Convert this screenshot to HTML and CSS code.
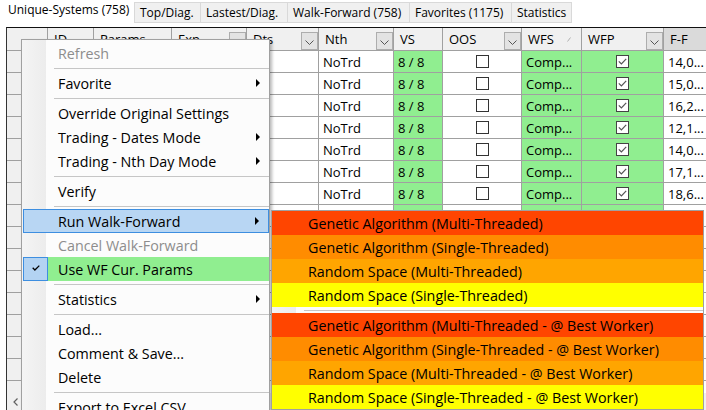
FILE: index.html
```html
<!DOCTYPE html>
<html>
<head>
<meta charset="utf-8">
<title>Unique-Systems</title>
<link rel="stylesheet" href="styles.css">
</head>
<body>
<div class="tabs">
  <div class="tab active">Unique-Systems (758)</div>
  <div class="tab first w1">Top/Diag.</div>
  <div class="tab w2">Lastest/Diag.</div>
  <div class="tab w3">Walk-Forward (758)</div>
  <div class="tab w4">Favorites (1175)</div>
  <div class="tab w5">Statistics</div>
</div>

<div class="grid">
  <div class="row hrow">
    <div class="c h"></div>
    <div class="c h">ID</div>
    <div class="c h">Params</div>
    <div class="c h">Exp<span class="dd"><svg width="9" height="5" viewBox="0 0 9 5"><path d="M0.5 0.5l4 4 4-4" fill="none" stroke="#555"/></svg></span></div>
    <div class="c h">Dts<span class="dd"><svg width="9" height="5" viewBox="0 0 9 5"><path d="M0.5 0.5l4 4 4-4" fill="none" stroke="#555"/></svg></span></div>
    <div class="c h">Nth<span class="dd"><svg width="9" height="5" viewBox="0 0 9 5"><path d="M0.5 0.5l4 4 4-4" fill="none" stroke="#555"/></svg></span></div>
    <div class="c h">VS</div>
    <div class="c h">OOS<span class="dd"><svg width="9" height="5" viewBox="0 0 9 5"><path d="M0.5 0.5l4 4 4-4" fill="none" stroke="#555"/></svg></span></div>
    <div class="c h">WFS<svg class="sort" width="4" height="5" viewBox="0 0 4 5"><path d="M0.5 4.5L3.5 0.5" stroke="#b0b0b0"/></svg></div>
    <div class="c h">WFP<span class="dd"><svg width="9" height="5" viewBox="0 0 9 5"><path d="M0.5 0.5l4 4 4-4" fill="none" stroke="#555"/></svg></span></div>
    <div class="c h sel">F-F</div>
  </div>
  <div class="rows">
    <div class="row"><div class="c rh"></div><div class="c"></div><div class="c"></div><div class="c"></div><div class="c"></div><div class="c">NoTrd</div><div class="c g">8 / 8</div><div class="c cb"><span class="box"></span></div><div class="c g">Comp...</div><div class="c g cb"><svg width="13" height="13" viewBox="0 0 13 13"><rect x="0.5" y="0.5" width="12" height="12" fill="#fff" stroke="#444"/><path d="M2.8 6.4l2.6 2.6 4.8-5.2" fill="none" stroke="#555" stroke-width="1.2"/></svg></div><div class="c">14,0...</div></div>
    <div class="row"><div class="c rh"></div><div class="c"></div><div class="c"></div><div class="c"></div><div class="c"></div><div class="c">NoTrd</div><div class="c g">8 / 8</div><div class="c cb"><span class="box"></span></div><div class="c g">Comp...</div><div class="c g cb"><svg width="13" height="13" viewBox="0 0 13 13"><rect x="0.5" y="0.5" width="12" height="12" fill="#fff" stroke="#444"/><path d="M2.8 6.4l2.6 2.6 4.8-5.2" fill="none" stroke="#555" stroke-width="1.2"/></svg></div><div class="c">15,0...</div></div>
    <div class="row"><div class="c rh"></div><div class="c"></div><div class="c"></div><div class="c"></div><div class="c"></div><div class="c">NoTrd</div><div class="c g">8 / 8</div><div class="c cb"><span class="box"></span></div><div class="c g">Comp...</div><div class="c g cb"><svg width="13" height="13" viewBox="0 0 13 13"><rect x="0.5" y="0.5" width="12" height="12" fill="#fff" stroke="#444"/><path d="M2.8 6.4l2.6 2.6 4.8-5.2" fill="none" stroke="#555" stroke-width="1.2"/></svg></div><div class="c">16,2...</div></div>
    <div class="row"><div class="c rh"></div><div class="c"></div><div class="c"></div><div class="c"></div><div class="c"></div><div class="c">NoTrd</div><div class="c g">8 / 8</div><div class="c cb"><span class="box"></span></div><div class="c g">Comp...</div><div class="c g cb"><svg width="13" height="13" viewBox="0 0 13 13"><rect x="0.5" y="0.5" width="12" height="12" fill="#fff" stroke="#444"/><path d="M2.8 6.4l2.6 2.6 4.8-5.2" fill="none" stroke="#555" stroke-width="1.2"/></svg></div><div class="c">12,1...</div></div>
    <div class="row"><div class="c rh"></div><div class="c"></div><div class="c"></div><div class="c"></div><div class="c"></div><div class="c">NoTrd</div><div class="c g">8 / 8</div><div class="c cb"><span class="box"></span></div><div class="c g">Comp...</div><div class="c g cb"><svg width="13" height="13" viewBox="0 0 13 13"><rect x="0.5" y="0.5" width="12" height="12" fill="#fff" stroke="#444"/><path d="M2.8 6.4l2.6 2.6 4.8-5.2" fill="none" stroke="#555" stroke-width="1.2"/></svg></div><div class="c">14,0...</div></div>
    <div class="row"><div class="c rh"></div><div class="c"></div><div class="c"></div><div class="c"></div><div class="c"></div><div class="c">NoTrd</div><div class="c g">8 / 8</div><div class="c cb"><span class="box"></span></div><div class="c g">Comp...</div><div class="c g cb"><svg width="13" height="13" viewBox="0 0 13 13"><rect x="0.5" y="0.5" width="12" height="12" fill="#fff" stroke="#444"/><path d="M2.8 6.4l2.6 2.6 4.8-5.2" fill="none" stroke="#555" stroke-width="1.2"/></svg></div><div class="c">17,1...</div></div>
    <div class="row"><div class="c rh"></div><div class="c"></div><div class="c"></div><div class="c"></div><div class="c"></div><div class="c">NoTrd</div><div class="c g">8 / 8</div><div class="c cb"><span class="box"></span></div><div class="c g">Comp...</div><div class="c g cb"><svg width="13" height="13" viewBox="0 0 13 13"><rect x="0.5" y="0.5" width="12" height="12" fill="#fff" stroke="#444"/><path d="M2.8 6.4l2.6 2.6 4.8-5.2" fill="none" stroke="#555" stroke-width="1.2"/></svg></div><div class="c">18,6...</div></div>
    <div class="row"><div class="c rh"></div><div class="c"></div><div class="c"></div><div class="c"></div><div class="c"></div><div class="c"></div><div class="c g"></div><div class="c"></div><div class="c g"></div><div class="c g"></div><div class="c"></div></div>
    <div class="row"><div class="c rh"></div><div class="c"></div><div class="c"></div><div class="c"></div><div class="c"></div><div class="c"></div><div class="c g"></div><div class="c"></div><div class="c g"></div><div class="c g"></div><div class="c"></div></div>
    <div class="row"><div class="c rh"></div><div class="c"></div><div class="c"></div><div class="c"></div><div class="c"></div><div class="c"></div><div class="c g"></div><div class="c"></div><div class="c g"></div><div class="c g"></div><div class="c"></div></div>
    <div class="row"><div class="c rh"></div><div class="c"></div><div class="c"></div><div class="c"></div><div class="c"></div><div class="c"></div><div class="c g"></div><div class="c"></div><div class="c g"></div><div class="c g"></div><div class="c"></div></div>
    <div class="row"><div class="c rh"></div><div class="c"></div><div class="c"></div><div class="c"></div><div class="c"></div><div class="c"></div><div class="c g"></div><div class="c"></div><div class="c g"></div><div class="c g"></div><div class="c"></div></div>
    <div class="row"><div class="c rh"></div><div class="c"></div><div class="c"></div><div class="c"></div><div class="c"></div><div class="c"></div><div class="c g"></div><div class="c"></div><div class="c g"></div><div class="c g"></div><div class="c"></div></div>
    <div class="row"><div class="c rh"></div><div class="c"></div><div class="c"></div><div class="c"></div><div class="c"></div><div class="c"></div><div class="c g"></div><div class="c"></div><div class="c g"></div><div class="c g"></div><div class="c"></div></div>
    <div class="row"><div class="c rh"></div><div class="c"></div><div class="c"></div><div class="c"></div><div class="c"></div><div class="c"></div><div class="c g"></div><div class="c"></div><div class="c g"></div><div class="c g"></div><div class="c"></div></div>
    <div class="row"><div class="c rh"></div><div class="c"></div><div class="c"></div><div class="c"></div><div class="c"></div><div class="c"></div><div class="c g"></div><div class="c"></div><div class="c g"></div><div class="c g"></div><div class="c"></div></div>
  </div>
  <div class="hscroll">
    <span class="sb-btn"><svg width="5" height="8" viewBox="0 0 5 8"><path d="M4.5 0.5L1 4l3.5 3.5" fill="none" stroke="#606060" stroke-width="1.2"/></svg></span>
  </div>
</div>

<div class="menu">
  <div class="mi dis">Refresh</div>
  <div class="sep"></div>
  <div class="mi">Favorite<span class="arr"></span></div>
  <div class="sep"></div>
  <div class="mi">Override Original Settings</div>
  <div class="mi">Trading - Dates Mode<span class="arr"></span></div>
  <div class="mi">Trading - Nth Day Mode<span class="arr"></span></div>
  <div class="sep"></div>
  <div class="mi">Verify</div>
  <div class="sep"></div>
  <div class="mi hl">Run Walk-Forward<span class="arr"></span></div>
  <div class="mi dis">Cancel Walk-Forward</div>
  <div class="mi chk"><span class="ck"><svg width="8" height="6" viewBox="0 0 8 6"><path d="M0.7 2.8l2.2 2.2 4.4-4.4" fill="none" stroke="#000" stroke-width="1.3"/></svg></span>Use WF Cur. Params</div>
  <div class="sep"></div>
  <div class="mi">Statistics<span class="arr"></span></div>
  <div class="sep"></div>
  <div class="mi">Load...</div>
  <div class="mi">Comment &amp; Save...</div>
  <div class="mi">Delete</div>
  <div class="sep"></div>
  <div class="mi">Export to Excel CSV</div>
</div>

<div class="submenu">
  <div class="si c1">Genetic Algorithm (Multi-Threaded)</div>
  <div class="si c2">Genetic Algorithm (Single-Threaded)</div>
  <div class="si c3">Random Space (Multi-Threaded)</div>
  <div class="si c4">Random Space (Single-Threaded)</div>
  <div class="sep"></div>
  <div class="si c1">Genetic Algorithm (Multi-Threaded - @ Best Worker)</div>
  <div class="si c2">Genetic Algorithm (Single-Threaded - @ Best Worker)</div>
  <div class="si c3">Random Space (Multi-Threaded - @ Best Worker)</div>
  <div class="si c4">Random Space (Single-Threaded - @ Best Worker)</div>
</div>
</body>
</html>
```

FILE: styles.css
```css
* { box-sizing: border-box; }
html, body { margin: 0; padding: 0; }
body {
  width: 706px;
  height: 410px;
  overflow: hidden;
  position: relative;
  background: #fff;
  font-family: "Open Sans", "Noto Sans", sans-serif;
  font-size: 14.3px;
  color: #000;
}

/* tabs */
.tabs { display: flex; align-items: flex-start; height: 23px; font-size: 12px; }
.tab {
  height: 21px;
  margin-top: 2px;
  background: #f0f0f0;
  border: 1px solid #d9d9d9;
  border-left: none;
  padding-left: 5px;
  line-height: 19px;
  white-space: nowrap;
}
.tab.first { border-left: 1px solid #d9d9d9; }
.tab.active {
  width: 134px;
  height: 23px;
  margin-top: 0;
  border: none;
  background: #fff;
  padding-left: 8px;
  line-height: 20px;
}
.w1 { width: 67px; }
.w2 { width: 87px; }
.w3 { width: 122px; }
.w4 { width: 102px; }
.w5 { width: 60px; }

/* grid */
.grid {
  margin: 4px 0 0 6px;
  width: 700px;
  border-left: 1px solid #333;
  border-top: 1px solid #111;
  overflow: hidden;
  font-size: 13px;
}
.row {
  display: grid;
  grid-template-columns: 41px 46px 78px 75px 72px 75px 49px 79px 60px 82px 100px;
  height: 22px;
}
.hrow { height: 23px; }
.c {
  border-right: 1px solid #a0a0a0;
  border-bottom: 1px solid #a0a0a0;
  padding-left: 4px;
  line-height: 22px;
  white-space: nowrap;
  overflow: hidden;
  background: #fff;
}
.c.h {
  background: #f0f0f0;
  display: flex;
  align-items: center;
  padding-left: 6px;
  line-height: 20px;
}
.c.h.sel { background: #dadada; }
.c.rh { background: #f0f0f0; }
.c.g { background: #90ee90; }
.c.cb { display: flex; align-items: center; justify-content: center; padding-left: 0; }
.box {
  width: 13px;
  height: 13px;
  border: 1px solid #333;
  background: #fff;
}
.dd {
  margin-left: auto;
  align-self: flex-end;
  width: 17px;
  height: 18px;
  background: #e3e3e3;
  border: 1px solid #adadad;
  display: flex;
  align-items: center;
  justify-content: center;
  padding-top: 3px;
}
.sort { margin-left: auto; margin-right: 10px; margin-top: 1px; }
.rows { height: 342px; overflow: hidden; }
.hscroll { height: 17px; background: #f0f0f0; display: flex; }
.sb-btn { width: 17px; display: flex; align-items: center; justify-content: center; }

/* context menu */
.menu {
  position: absolute;
  left: 21px;
  top: 39px;
  width: 249px;
  padding: 1px 0 0;
  border: 1px solid #a0a0a0;
  background: linear-gradient(to right, #f4f4f4 0, #ececec 24px, #fcfcfc 24px);
  box-shadow: 2px 2px 3px rgba(0, 0, 0, 0.28);
}
.mi {
  height: 24px;
  margin-left: 1px;
  padding-left: 35px;
  display: flex;
  align-items: center;
  white-space: nowrap;
}
.mi.dis { color: #8d8d8d; }
.mi.hl {
  background: #b8d6f3;
  border: 1px solid #3d8ee0;
  padding-left: 34px;
}
.mi.chk { background: #90ee90; padding-left: 0; }
.ck {
  width: 25px;
  height: 24px;
  margin-right: 10px;
  background: #b3d3f2;
  border: 1px solid #3d8ee0;
  display: flex;
  align-items: center;
  justify-content: center;
  padding-bottom: 3px;
}
.arr {
  margin-left: auto;
  margin-right: 9px;
  width: 0;
  height: 0;
  border-left: 4px solid #000;
  border-top: 4px solid transparent;
  border-bottom: 4px solid transparent;
}
.sep { height: 6px; padding: 3px 0 0 32px; }
.sep::after { content: ""; display: block; height: 1px; background: #c6c6c6; }

/* submenu */
.submenu {
  position: absolute;
  left: 271px;
  top: 210px;
  width: 433px;
  border: 1px solid #a0a0a0;
  background: linear-gradient(to right, #f4f4f4 0, #ececec 24px, #fcfcfc 24px);
}
.si {
  height: 24px;
  padding-left: 36px;
  display: flex;
  align-items: center;
  white-space: nowrap;
}
.c1 { background: #ff4500; }
.c2 { background: #ff8c00; }
.c3 { background: #ffa500; }
.c4 { background: #ffff00; }
```
